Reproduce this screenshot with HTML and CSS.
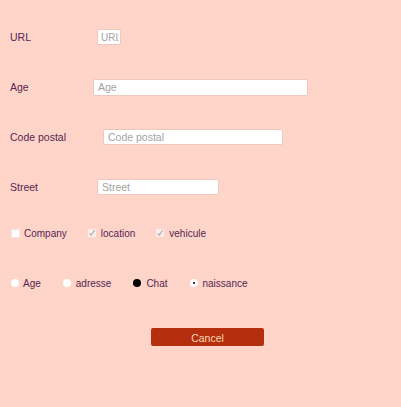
FILE: index.html
```html
<!DOCTYPE html>
<html>
<head>
<meta charset="utf-8">
<link rel="stylesheet" href="styles.css">
</head>
<body>
<form class="form">
  <div class="row">
    <label class="lbl lbl-url">URL</label>
    <input class="field f-url" type="text" placeholder="URL">
  </div>
  <div class="row">
    <label class="lbl lbl-age">Age</label>
    <input class="field f-age" type="text" placeholder="Age">
  </div>
  <div class="row">
    <label class="lbl lbl-code">Code postal</label>
    <input class="field f-code" type="text" placeholder="Code postal">
  </div>
  <div class="row">
    <label class="lbl lbl-street">Street</label>
    <input class="field f-street" type="text" placeholder="Street">
  </div>
  <div class="row row-checks">
    <span class="opt"><span class="box"></span>Company</span>
    <span class="opt"><span class="box box-checked"><svg viewBox="0 0 8 8" width="8" height="8"><path d="M1.5 4.2 L3.3 6.2 L6.6 1.2" fill="none" stroke="#b8b8b8" stroke-width="1.4"/></svg></span>location</span>
    <span class="opt"><span class="box box-checked"><svg viewBox="0 0 8 8" width="8" height="8"><path d="M1.5 4.2 L3.3 6.2 L6.6 1.2" fill="none" stroke="#b8b8b8" stroke-width="1.4"/></svg></span>vehicule</span>
  </div>
  <div class="row row-radios">
    <span class="opt"><span class="radio"></span>Age</span>
    <span class="opt"><span class="radio"></span>adresse</span>
    <span class="opt"><span class="radio radio-filled"></span>Chat</span>
    <span class="opt"><span class="radio radio-dot"></span>naissance</span>
  </div>
  <div class="actions">
    <button class="btn" type="button">Cancel</button>
  </div>
</form>
</body>
</html>
```

FILE: styles.css
```css
html, body {
  margin: 0;
  padding: 0;
}
body {
  background: #ffd4c9;
  font-family: "Liberation Sans", Arial, sans-serif;
  font-size: 10.5px;
  color: #5a2450;
  width: 401px;
  height: 407px;
}
.form {
  padding-top: 12px;
}
.row {
  display: flex;
  align-items: center;
  height: 50px;
  padding-left: 10px;
}
.lbl {
  flex: none;
}
.lbl-url { width: 87px; }
.lbl-age { width: 83px; }
.lbl-code { width: 93px; }
.lbl-street { width: 87px; }
.field {
  box-sizing: border-box;
  height: 16px;
  border: 1px solid #f0c7bd;
  border-radius: 2px;
  background: #fff;
  padding: 0 4px;
  font-family: "Liberation Sans", Arial, sans-serif;
  font-size: 10.5px;
  color: #444;
  outline: none;
}
.field::placeholder {
  color: #a3a3a3;
}
.f-url { width: 24px; padding: 0 2px 0 3px; font-size: 10px; }
.f-age { width: 215px; height: 17px; }
.f-code { width: 180px; }
.f-street { width: 122px; }
.row-checks {
  height: 42px;
  padding-left: 11px;
  gap: 21px;
  font-size: 10px;
}
.row-radios {
  margin-top: 4px;
  padding-left: 11px;
  gap: 22px;
  font-size: 10px;
}
.opt {
  display: flex;
  align-items: center;
  gap: 4px;
}
.box {
  width: 9px;
  height: 9px;
  background: #fff;
  border: 1px solid #f6e6e2;
  box-sizing: border-box;
  display: flex;
  align-items: center;
  justify-content: center;
}
.box-checked {
  background: #fbeeea;
  width: 8px;
  height: 8px;
  border: none;
}
.row-checks .opt:nth-child(2),
.row-checks .opt:nth-child(3) {
  gap: 5px;
}
.radio {
  width: 8px;
  height: 8px;
  border-radius: 50%;
  background: #fff;
  position: relative;
}
.row-radios .opt:nth-child(n+2) {
  gap: 5px;
}
.radio-filled {
  background: #000;
}
.radio-dot::after {
  content: "";
  position: absolute;
  left: 3px;
  top: 3px;
  width: 2px;
  height: 2px;
  border-radius: 50%;
  background: #000;
}
.actions {
  margin-top: 20px;
  padding-left: 151px;
}
.btn {
  display: block;
  width: 113px;
  height: 18px;
  border: none;
  border-radius: 2px;
  background: #b52e0d;
  color: #f6d9b6;
  font-family: "Liberation Sans", Arial, sans-serif;
  font-size: 10.5px;
  padding: 1px 0 0;
  cursor: pointer;
}
```
